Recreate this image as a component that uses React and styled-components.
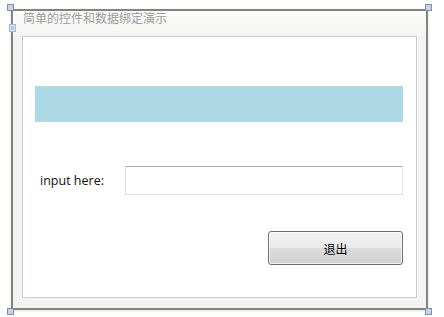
import styled, { createGlobalStyle } from "styled-components";

const Global = createGlobalStyle`
body {
  margin: 0;
  background: #ffffff;
  font-family: "Open Sans", "Noto Sans CJK SC", sans-serif;
}
`;

const Page = styled.div`
padding: 9px 0 0 11px;
width: 444px;
height: 317px;
box-sizing: border-box;
`;

const Frame = styled.div`
position: relative;
width: 417px;
height: 301px;
box-sizing: border-box;
border: 2px solid #86837c;
background: #f4f3f2;
display: flex;
flex-direction: column;
box-shadow: 0 1px 3px rgba(0, 0, 0, 0.12);
`;

const Handle = styled.div`
position: absolute;
width: 5px;
height: 5px;
border: 1px solid #7e8ea8;
background: #c9d3e3;
top: ${(p) => (p.bottom ? "auto" : "-7px")};
bottom: ${(p) => (p.bottom ? "-7px" : "auto")};
left: ${(p) => (p.right ? "auto" : "-6px")};
right: ${(p) => (p.right ? "-6px" : "auto")};
`;

const TitleRow = styled.div`
height: 25px;
padding-left: 10px;
font-family: "Noto Sans CJK SC", sans-serif;
font-size: 12px;
line-height: 14px;
color: #9b9b9b;
background: linear-gradient(#fbfbfb, #f5f5f4);
`;

const Glyph = styled.svg`
position: absolute;
left: -4px;
top: 12px;
`;

const Panel = styled.div`
margin: 0 9px;
height: 262px;
box-sizing: border-box;
border: 1px solid #c8ccd3;
background: #ffffff;
display: flex;
flex-direction: column;
`;

const Bar = styled.div`
margin: 49px 13px 0 12px;
height: 36px;
background: #add8e6;
`;

const InputRow = styled.div`
margin: 44px 13px 0 17px;
display: flex;
align-items: center;
`;

const Label = styled.span`
width: 85px;
font-size: 12.5px;
color: #111;
`;

const TextBox = styled.div`
flex: 1;
height: 29px;
box-sizing: border-box;
border: 1px solid #e2e6ea;
border-top-color: #abadb3;
border-left-color: #dbdfe6;
background: #fff;
`;

const ButtonRow = styled.div`
margin: 36px 13px 0 0;
display: flex;
justify-content: flex-end;
`;

const Button = styled.div`
width: 135px;
height: 34px;
box-sizing: border-box;
border: 1px solid #707070;
border-radius: 3px;
background: linear-gradient(#f2f2f2 0%, #ebebeb 50%, #dddddd 50%, #cfcfcf 100%);
box-shadow: inset 0 0 0 1px rgba(255, 255, 255, 0.7);
display: flex;
align-items: center;
justify-content: center;
font-family: "Noto Sans CJK SC", sans-serif;
font-size: 12px;
color: #000;
`;

export default function App() {
  return (
    <Page>
      <Global />
      <Frame>
        <Handle />
        <Handle right />
        <Handle bottom />
        <Handle bottom right />
        <Glyph width="8" height="10" viewBox="0 0 8 10">
          <rect x="0.5" y="1.5" width="6" height="7" fill="#dce6f2" stroke="#9fb6d4" />
          <path d="M2 4h3M2 6h3" stroke="#8aa6cc" strokeWidth="1" />
        </Glyph>
        <TitleRow>简单的控件和数据绑定演示</TitleRow>
        <Panel>
          <Bar />
          <InputRow>
            <Label>input here:</Label>
            <TextBox />
          </InputRow>
          <ButtonRow>
            <Button>退出</Button>
          </ButtonRow>
        </Panel>
      </Frame>
    </Page>
  );
}
